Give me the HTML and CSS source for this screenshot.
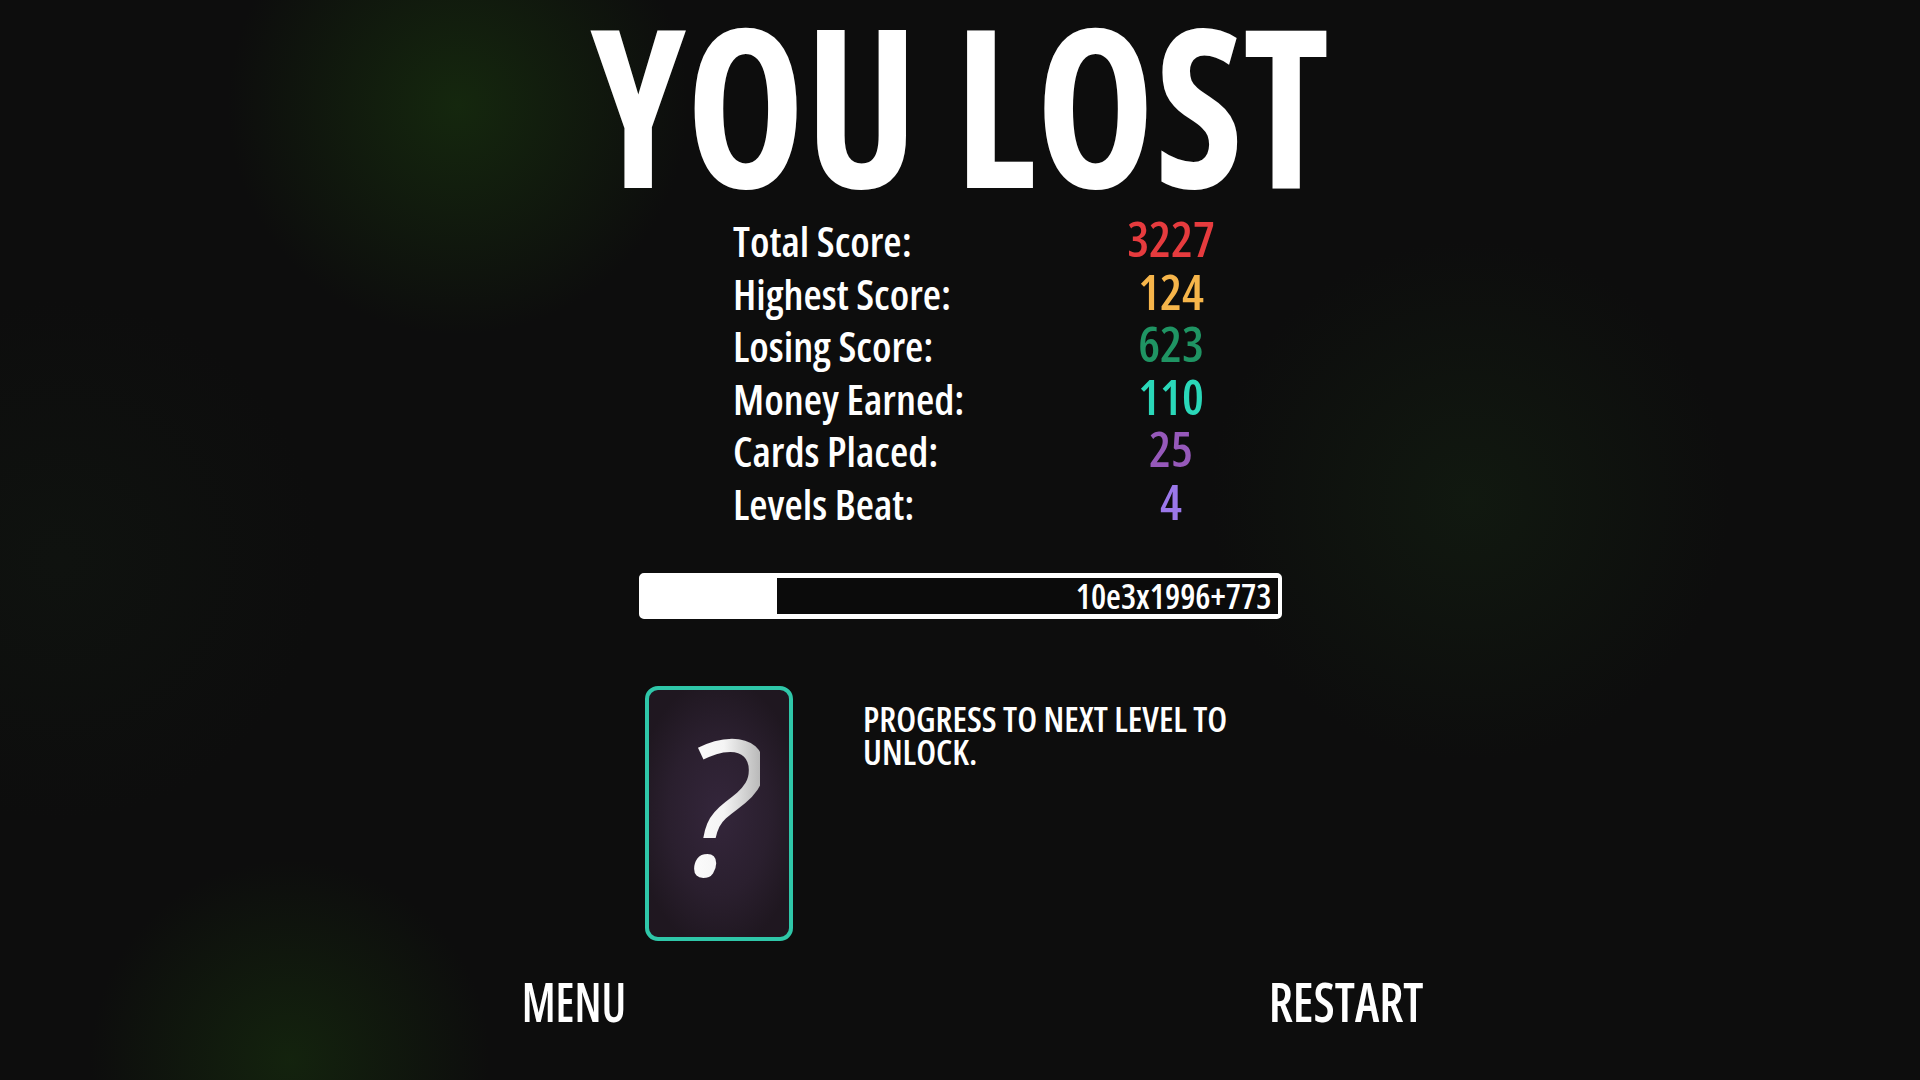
FILE: index.html
```html
<!DOCTYPE html>
<html lang="en">
<head>
<meta charset="utf-8">
<title>You Lost</title>
<link rel="stylesheet" href="styles.css">
</head>
<body>
<main class="screen">
  <h1 class="title"><span class="squeeze-c">YOU LOST</span></h1>

  <section class="stats">
    <div class="row"><span class="label">Total Score:</span><span class="value v-red">3227</span></div>
    <div class="row"><span class="label">Highest Score:</span><span class="value v-orange">124</span></div>
    <div class="row"><span class="label">Losing Score:</span><span class="value v-green">623</span></div>
    <div class="row"><span class="label">Money Earned:</span><span class="value v-teal">110</span></div>
    <div class="row"><span class="label">Cards Placed:</span><span class="value v-purple">25</span></div>
    <div class="row"><span class="label">Levels Beat:</span><span class="value v-lavender">4</span></div>
  </section>

  <div class="bar">
    <div class="bar-fill"></div>
    <div class="bar-text">10e3x1996+773</div>
  </div>

  <section class="unlock">
    <div class="card"><span class="qmark">?</span></div>
    <p class="unlock-text">PROGRESS TO NEXT LEVEL TO UNLOCK.</p>
  </section>

  <nav class="buttons">
    <div class="btn"><span class="squeeze-menu">MENU</span></div>
    <div class="btn"><span class="squeeze-c">RESTART</span></div>
  </nav>
</main>
</body>
</html>
```
FILE: styles.css
```css
html, body {
  margin: 0;
  padding: 0;
}
body {
  width: 1920px;
  height: 1080px;
  overflow: hidden;
  color: #ffffff;
  font-family: "Open Sans", "Liberation Sans Narrow", sans-serif;
  font-stretch: 75%;
  background-color: #0d0d0d;
  background-image:
    radial-gradient(circle at 458px 105px, rgba(22, 44, 14, 0.85) 0px, rgba(22, 44, 14, 0) 230px),
    radial-gradient(circle at 290px 1060px, rgba(22, 44, 14, 0.7) 0px, rgba(22, 44, 14, 0) 200px),
    radial-gradient(circle at 1470px 500px, rgba(20, 34, 18, 0.55) 0px, rgba(20, 34, 18, 0) 260px),
    radial-gradient(circle at 60px 560px, rgba(18, 26, 18, 0.4) 0px, rgba(18, 26, 18, 0) 260px);
}

.screen {
  display: flex;
  flex-direction: column;
  align-items: center;
  height: 1080px;
}

.squeeze-c {
  display: inline-block;
  transform: scaleX(0.91);
  transform-origin: center;
}
.squeeze-menu {
  display: inline-block;
  transform: scaleX(0.83);
  transform-origin: center;
}

.title {
  margin: 13px 0 0 0;
  font-size: 221px;
  line-height: 180px;
  font-weight: 700;
  text-align: center;
  white-space: nowrap;
}

.stats {
  margin-top: 22px;
  width: 490px;
  display: flex;
  flex-direction: column;
  margin-left: 36px;
}
.row {
  display: flex;
  align-items: baseline;
  height: 52.6px;
}
.label {
  width: 392px;
  font-size: 42px;
  line-height: 52.6px;
  font-weight: 600;
  white-space: nowrap;
}
.value {
  width: 92px;
  text-align: center;
  font-size: 49px;
  line-height: 40px;
  font-weight: 600;
}
.v-red { color: #e63b3e; }
.v-orange { color: #f6b54a; }
.v-green { color: #1f9463; }
.v-teal { color: #2ad8b9; }
.v-purple { color: #9659ba; }
.v-lavender { color: #9b78ea; }

.bar {
  margin-top: 42px;
  width: 643px;
  height: 46px;
  box-sizing: border-box;
  border: 4px solid #ffffff;
  border-top-width: 5px;
  border-bottom-width: 5px;
  border-radius: 5px;
  background: #0b0b0b;
  display: flex;
  align-items: stretch;
}
.bar-fill {
  width: 134px;
  background: #ffffff;
}
.bar-text {
  flex: 1;
  text-align: right;
  padding-right: 6px;
  font-size: 34px;
  line-height: 36px;
  font-weight: 600;
}

.unlock {
  margin-top: 67px;
  width: 643px;
  display: flex;
  align-items: flex-start;
}
.card {
  margin-left: 6px;
  width: 149px;
  height: 255px;
  box-sizing: border-box;
  border: 4px solid #2fc7a9;
  border-radius: 13px;
  background: radial-gradient(ellipse 60% 55% at 50% 50%, #34263b 0%, #2a1f2e 60%, #1f1720 100%);
  display: flex;
  align-items: center;
  justify-content: center;
}
.qmark {
  font-size: 188px;
  line-height: 1;
  font-style: italic;
  font-weight: 400;
  font-stretch: 100%;
  background: linear-gradient(90deg, #ffffff 0%, #f4f4f4 55%, #b9b9b9 100%);
  -webkit-background-clip: text;
  background-clip: text;
  color: transparent;
  margin-top: -22px;
  margin-left: 2px;
}
.unlock-text {
  margin: 16px 0 0 70px;
  width: 420px;
  font-size: 35px;
  line-height: 33px;
  font-weight: 600;
}

.buttons {
  margin-top: 30px;
  display: flex;
  gap: 472px;
}
.btn {
  width: 300px;
  text-align: center;
  font-size: 55px;
  line-height: 60px;
  font-weight: 600;
}
```
